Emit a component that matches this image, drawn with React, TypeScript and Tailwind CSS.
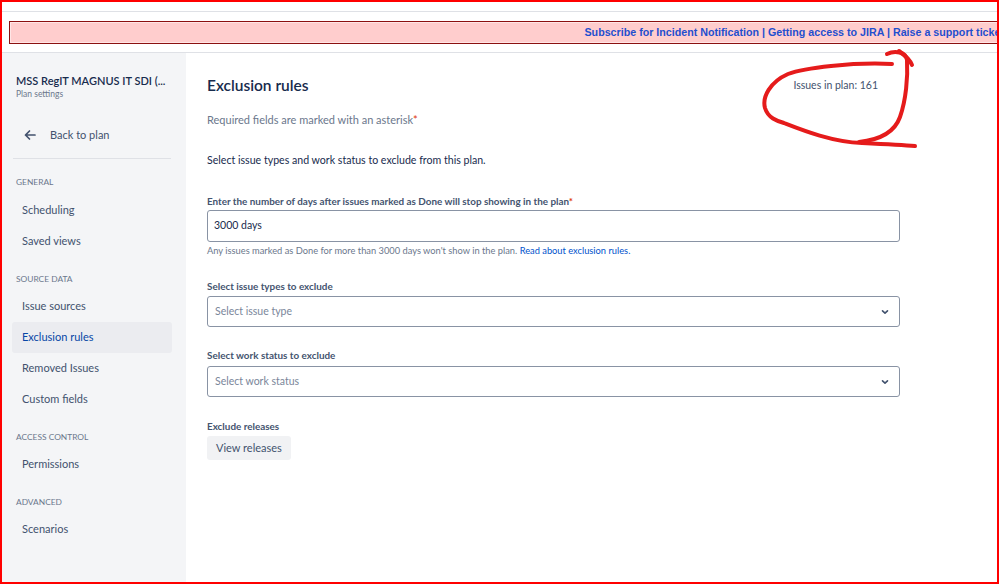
import React from "react";

const font = { fontFamily: 'Lato, "Noto Sans", sans-serif' };

function NavItem({ label, active = false }: { label: string; active?: boolean }) {
  return (
    <div
      className={`h-[31px] flex items-center pl-[10px] rounded-[3px] text-[11px] ${
        active ? "bg-[#ebecf0] text-[#0747a6]" : "text-[#42526e]"
      }`}
    >
      {label}
    </div>
  );
}

function NavHeader({ label }: { label: string }) {
  return (
    <div className="h-[14px] mt-[15px] mb-[5px] pl-[4px] flex items-center text-[8.4px] text-[#6b778c] uppercase">
      {label}
    </div>
  );
}

function Chevron() {
  return (
    <svg width="10" height="10" viewBox="0 0 10 10" className="text-[#42526e]">
      <path d="M2.5 3.8 L5 6.2 L7.5 3.8" fill="none" stroke="currentColor" strokeWidth="1.6" strokeLinecap="round" strokeLinejoin="round" />
    </svg>
  );
}

export default function App() {
  return (
    <div className="relative w-[999px] h-[584px] overflow-hidden bg-white border-2 border-[#ff0000] box-border" style={font}>
      {/* top strip */}
      <div className="h-[9px] border-b border-[#dfe1e6] box-content" />
      <div className="h-[9px]" />
      {/* banner */}
      <div className="ml-[7px] w-[1010px] h-[23px] bg-[#ffcdcd] border-[1.5px] border-[#8b1010] shadow-[inset_0_0_0_1px_#ffe6e6] flex items-center justify-end pr-[14px]">
        <span
          className="text-[10.7px] font-bold text-[#1f4fcf] whitespace-nowrap"
          style={{ fontFamily: '"Liberation Sans", Arial, sans-serif' }}
        >
          Subscribe for Incident Notification | Getting access to JIRA | Raise a support ticket
        </span>
      </div>
      <div className="h-[8px] border-b border-[#dfe1e6] box-content" />

      <div className="flex h-[529px]">
        {/* sidebar */}
        <aside className="w-[184px] shrink-0 bg-[#f4f5f7] pt-[21px] pl-[10px] pr-[14px]">
          <div className="pl-[4px]">
            <div className="text-[11px] leading-[14px] font-semibold text-[#172b4d] whitespace-nowrap">
              MSS RegIT MAGNUS IT SDI (...
            </div>
            <div className="text-[8.5px] leading-[12px] text-[#6b778c]">Plan settings</div>
          </div>
          <div className="mt-[19px] h-[32px] flex items-center text-[11px] text-[#42526e]">
            <svg width="14" height="14" viewBox="0 0 14 14" className="ml-[11px] mr-[13px]">
              <path d="M12 7 H2.5 M6.5 3 L2.5 7 L6.5 11" fill="none" stroke="#42526e" strokeWidth="1.7" strokeLinecap="round" strokeLinejoin="round" />
            </svg>
            Back to plan
          </div>
          <div className="mt-[7px] mx-[1px] border-t border-[#dfe1e6]" />
          <div className="h-[1px]" />
          <NavHeader label="General" />
          <div className="h-[1px]" />
          <NavItem label="Scheduling" />
          <NavItem label="Saved views" />
          <NavHeader label="Source data" />
          <NavItem label="Issue sources" />
          <NavItem label="Exclusion rules" active />
          <NavItem label="Removed Issues" />
          <NavItem label="Custom fields" />
          <NavHeader label="Access control" />
          <NavItem label="Permissions" />
          <NavHeader label="Advanced" />
          <NavItem label="Scenarios" />
        </aside>

        {/* main */}
        <main className="flex-1 pl-[21px] pt-[22px]">
          <div className="w-[671px] h-[20px] flex items-center justify-between">
            <h1 className="text-[15.5px] leading-[20px] font-semibold text-[#172b4d]">Exclusion rules</h1>
            <span className="text-[10.5px] text-[#42526e] mt-[1px]">Issues in plan: 161</span>
          </div>
          <p className="mt-[18px] text-[11px] leading-[14px] text-[#6b778c]">
            Required fields are marked with an asterisk<span className="text-[#de350b]">*</span>
          </p>
          <p className="mt-[26px] text-[10.6px] leading-[14px] text-[#172b4d]">
            Select issue types and work status to exclude from this plan.
          </p>

          <div className="mt-[27px] text-[9.9px] leading-[14px] font-bold text-[#44546f]">
            Enter the number of days after issues marked as Done will stop showing in the plan
            <span className="text-[#de350b]">*</span>
          </div>
          <div className="mt-[2px] w-[693px] h-[32px] border border-[#8993a4] rounded-[3px] flex items-center pl-[6px] text-[10.5px] text-[#172b4d]">
            3000 days
          </div>
          <p className="mt-[3px] text-[9.3px] leading-[12px] text-[#6b778c]">
            Any issues marked as Done for more than 3000 days won't show in the plan.{" "}
            <span className="text-[#0052cc]">Read about exclusion rules.</span>
          </p>

          <div className="mt-[22px] text-[9.9px] leading-[14px] font-bold text-[#44546f]">Select issue types to exclude</div>
          <div className="mt-[3px] w-[693px] h-[31px] border border-[#8993a4] rounded-[3px] flex items-center justify-between pl-[7px] pr-[9px] text-[10.5px] text-[#7a869a]">
            <span>Select issue type</span>
            <Chevron />
          </div>

          <div className="mt-[21px] text-[9.9px] leading-[14px] font-bold text-[#44546f]">Select work status to exclude</div>
          <div className="mt-[4px] w-[693px] h-[31px] border border-[#8993a4] rounded-[3px] flex items-center justify-between pl-[7px] pr-[9px] text-[10.5px] text-[#7a869a]">
            <span>Select work status</span>
            <Chevron />
          </div>

          <div className="mt-[22px] text-[9.9px] leading-[14px] font-bold text-[#44546f]">Exclude releases</div>
          <button className="mt-[3px] h-[24px] px-[9px] rounded-[3px] bg-[#f1f2f4] text-[11px] text-[#42526e]">
            View releases
          </button>
        </main>
      </div>

      {/* hand-drawn annotation */}
      <svg className="absolute left-0 top-0 pointer-events-none" width="999" height="584" viewBox="0 0 999 584">
        <g fill="none" stroke="#e51b1b" strokeWidth="4" strokeLinecap="round" strokeLinejoin="round">
          <path d="M890 62 C850 60 802 66 786 72 C768 80 760 95 763 106 C766 116 775 119 782 121 C800 128 830 140 860 141 C880 142 900 143 913 144" />
          <path d="M857 140 C876 138 892 132 898 115 C904 98 906 75 905 58 C904 50 893 48 885 52" />
          <path d="M897 49 C904 54 908 58 910 63" />
        </g>
      </svg>
    </div>
  );
}
